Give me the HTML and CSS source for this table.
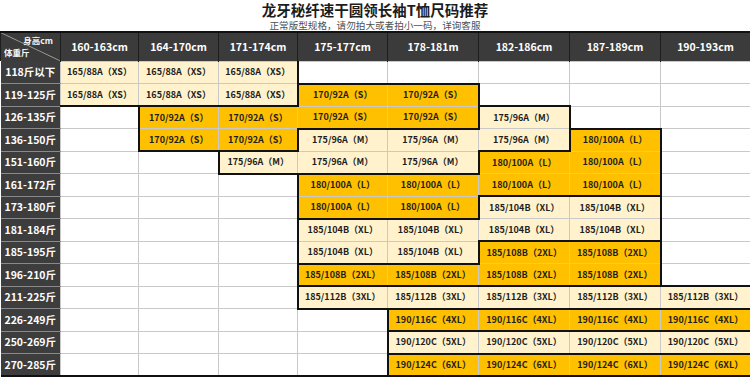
FILE: index.html
```html
<!DOCTYPE html>
<html lang="zh">
<head>
<meta charset="utf-8">
<link rel="stylesheet" href="styles.css">
</head>
<body>
<div class="head">
  <h1 class="title">龙牙秘纤速干圆领长袖T恤尺码推荐</h1>
  <p class="sub">正常版型规格，请勿拍大或者拍小一码，详询客服</p>
</div>
<table class="size">
  <colgroup>
    <col class="w60"><col class="w78"><col class="w80"><col class="w79"><col class="w90"><col class="w91"><col class="w91"><col class="w91"><col class="w90">
  </colgroup>
  <thead>
    <tr>
      <th class="corner"><span class="ch">身高cm</span><span class="cw">体重斤</span></th>
      <th class="h">160-163cm</th>
      <th class="h">164-170cm</th>
      <th class="h">171-174cm</th>
      <th class="h">175-177cm</th>
      <th class="h">178-181m</th>
      <th class="h">182-186cm</th>
      <th class="h">187-189cm</th>
      <th class="h">190-193cm</th>
    </tr>
  </thead>
  <tbody>
    <tr><th class="rh">118斤以下</th>
      <td class="c">165/88A（XS）</td><td class="c">165/88A（XS）</td><td class="c r">165/88A（XS）</td>
      <td></td><td></td><td></td><td></td><td></td></tr>
    <tr><th class="rh">119-125斤</th>
      <td class="c b">165/88A（XS）</td><td class="c b">165/88A（XS）</td><td class="c b r">165/88A（XS）</td>
      <td class="g t l">170/92A（S）</td><td class="g t r">170/92A（S）</td><td></td><td></td><td></td></tr>
    <tr><th class="rh">126-135斤</th>
      <td></td><td class="g t l">170/92A（S）</td><td class="g t">170/92A（S）</td>
      <td class="g b">170/92A（S）</td><td class="g b r">170/92A（S）</td><td class="c t l r">175/96A（M）</td><td></td><td></td></tr>
    <tr><th class="rh">136-150斤</th>
      <td></td><td class="g l b">170/92A（S）</td><td class="g b r">170/92A（S）</td>
      <td class="c t">175/96A（M）</td><td class="c t">175/96A（M）</td><td class="c r b">175/96A（M）</td><td class="g t r l">180/100A（L）</td><td></td></tr>
    <tr><th class="rh">151-160斤</th>
      <td></td><td></td><td class="c l t b">175/96A（M）</td>
      <td class="c b">175/96A（M）</td><td class="c b r">175/96A（M）</td><td class="g t">180/100A（L）</td><td class="g r">180/100A（L）</td><td></td></tr>
    <tr><th class="rh">161-172斤</th>
      <td></td><td></td><td></td>
      <td class="g l">180/100A（L）</td><td class="g">180/100A（L）</td><td class="g b">180/100A（L）</td><td class="g b r">180/100A（L）</td><td></td></tr>
    <tr><th class="rh">173-180斤</th>
      <td></td><td></td><td></td>
      <td class="g l b">180/100A（L）</td><td class="g b r">180/100A（L）</td><td class="c t">185/104B（XL）</td><td class="c t r">185/104B（XL）</td><td></td></tr>
    <tr><th class="rh">181-184斤</th>
      <td></td><td></td><td></td>
      <td class="c t l">185/104B（XL）</td><td class="c t">185/104B（XL）</td><td class="c b">185/104B（XL）</td><td class="c b r">185/104B（XL）</td><td></td></tr>
    <tr><th class="rh">185-195斤</th>
      <td></td><td></td><td></td>
      <td class="c l b">185/104B（XL）</td><td class="c b r">185/104B（XL）</td><td class="g t">185/108B（2XL）</td><td class="g t r">185/108B（2XL）</td><td></td></tr>
    <tr><th class="rh">196-210斤</th>
      <td></td><td></td><td></td>
      <td class="g t l b">185/108B（2XL）</td><td class="g t b">185/108B（2XL）</td><td class="g b">185/108B（2XL）</td><td class="g r b">185/108B（2XL）</td><td></td></tr>
    <tr><th class="rh">211-225斤</th>
      <td></td><td></td><td></td>
      <td class="c l t b">185/112B（3XL）</td><td class="c t b">185/112B（3XL）</td><td class="c b">185/112B（3XL）</td><td class="c b">185/112B（3XL）</td><td class="c t b">185/112B（3XL）</td></tr>
    <tr><th class="rh">226-249斤</th>
      <td></td><td></td><td></td><td></td>
      <td class="g l t b">190/116C（4XL）</td><td class="g b">190/116C（4XL）</td><td class="g b">190/116C（4XL）</td><td class="g b">190/116C（4XL）</td></tr>
    <tr><th class="rh">250-269斤</th>
      <td></td><td></td><td></td><td></td>
      <td class="c l b">190/120C（5XL）</td><td class="c b">190/120C（5XL）</td><td class="c b">190/120C（5XL）</td><td class="c b">190/120C（5XL）</td></tr>
    <tr><th class="rh">270-285斤</th>
      <td></td><td></td><td></td><td></td>
      <td class="g l">190/124C（6XL）</td><td class="g">190/124C（6XL）</td><td class="g">190/124C（6XL）</td><td class="g">190/124C（6XL）</td></tr>
  </tbody>
</table>
</body>
</html>
```
FILE: styles.css
```css
html, body {
  margin: 0;
  padding: 0;
  background: #ffffff;
}
body {
  width: 750px;
  font-family: "Noto Sans CJK SC", "Noto Sans", sans-serif;
  color: #1a1a1a;
}
.head {
  height: 31px;
  display: flex;
  flex-direction: column;
  align-items: center;
}
.title {
  margin: 0;
  padding-top: 1px;
  font-size: 14.5px;
  line-height: 17px;
  height: 17px;
  font-weight: 700;
  color: #1c1c1c;
}
.sub {
  margin: 2px 0 0;
  font-size: 9.6px;
  line-height: 11px;
  height: 11px;
  color: #505050;
}
.size {
  width: 750px;
  border-collapse: collapse;
  table-layout: fixed;
  border-top: 2px solid #111;
  border-bottom: 2px solid #111;
}
.w60 { width: 60px; }
.w78 { width: 78px; }
.w79 { width: 79px; }
.w80 { width: 80px; }
.w90 { width: 90px; }
.w91 { width: 91px; }
.size th, .size td {
  padding: 0;
  text-align: center;
  white-space: nowrap;
  overflow: hidden;
  line-height: 12px;
}
.size thead tr { height: 29px; }
.size tbody tr { height: 22.5px; }
.size td {
  border: 1px solid #c9c9c9;
  font-size: 9px;
  font-weight: 700;
  color: #1e1e1e;
  background: #ffffff;
}
.size thead th {
  background: #3b3b3b;
  color: #ffffff;
  border-left: 1px solid #1e1e1e;
  border-right: 1px solid #1e1e1e;
}
.h {
  font-size: 10.5px;
  font-weight: 700;
}
.corner {
  background-image: linear-gradient(to top right, transparent calc(50% - 0.7px), #b0b0b0 50%, transparent calc(50% + 0.7px)) !important;
  background-color: #3b3b3b;
}
.corner .ch,
.corner .cw {
  display: block;
  font-size: 8.5px;
  font-weight: 700;
  line-height: 10px;
  color: #f4f4f4;
}
.corner .ch {
  text-align: right;
  padding-right: 7px;
  margin-top: -2px;
}
.corner .cw {
  text-align: left;
  padding-left: 3px;
  margin-top: 2px;
}
.rh {
  background: #3d3d3d;
  color: #ffffff;
  font-size: 10.5px;
  font-weight: 700;
  border-bottom: 1px solid #8a8a8a;
  border-right: 1px solid #c9c9c9;
}
.c { background: #fff2cc !important; }
.g { background: #ffc000 !important; }
.size td.t { border-top: 2px solid #111; }
.size td.b { border-bottom: 2px solid #111; }
.size td.l { border-left: 2px solid #111; }
.size td.r { border-right: 2px solid #111; }
```
